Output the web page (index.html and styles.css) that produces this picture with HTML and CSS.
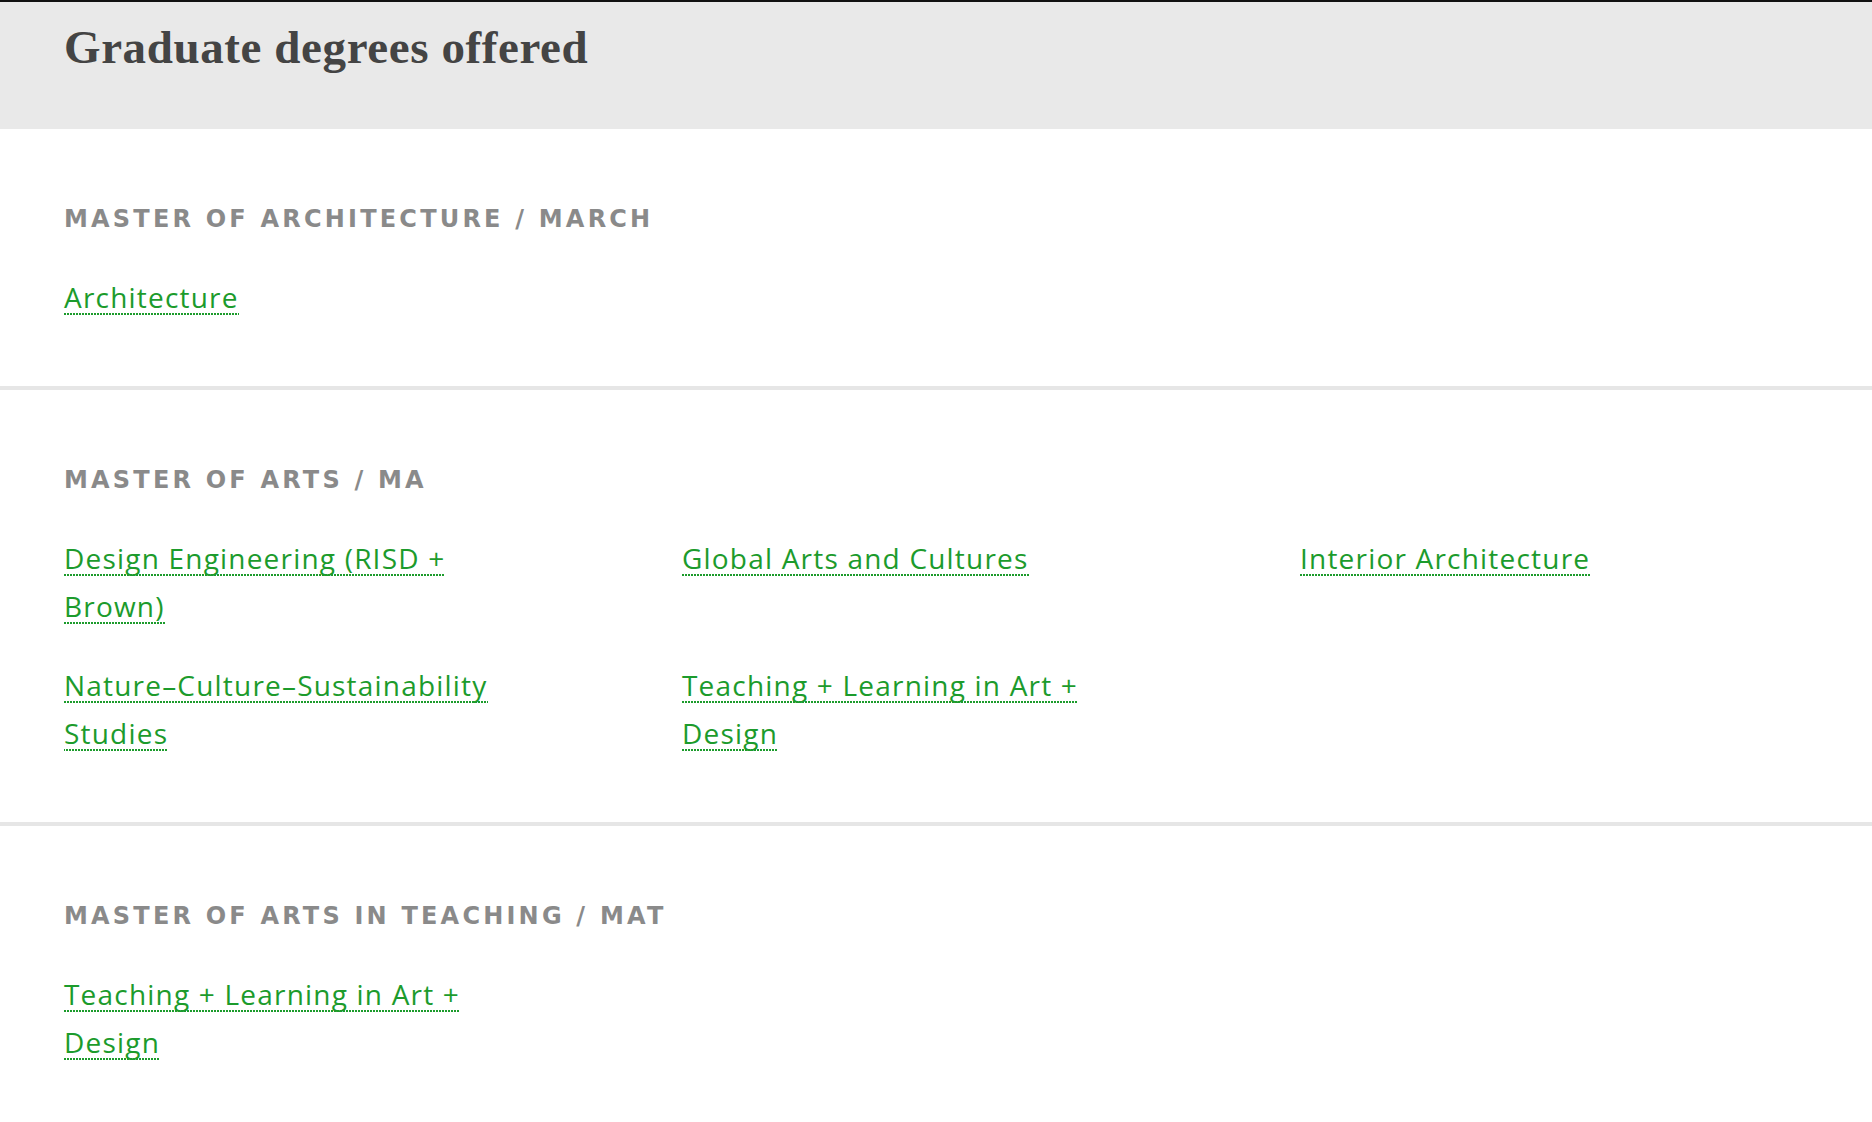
FILE: index.html
```html
<!DOCTYPE html>
<html lang="en">
<head>
<meta charset="utf-8">
<title>Graduate degrees offered</title>
<link rel="stylesheet" href="styles.css">
</head>
<body>
<header class="page-head">
  <h1 class="page-title">Graduate degrees offered</h1>
</header>
<main>
  <section class="degree">
    <h2 class="degree-title">Master of Architecture / MArch</h2>
    <ul class="programs">
      <li><a href="#">Architecture</a></li>
    </ul>
  </section>
  <section class="degree">
    <h2 class="degree-title">Master of Arts / MA</h2>
    <ul class="programs">
      <li><a href="#">Design Engineering (RISD + Brown)</a></li>
      <li><a href="#">Global Arts and Cultures</a></li>
      <li><a href="#">Interior Architecture</a></li>
      <li><a href="#">Nature–Culture–Sustainability Studies</a></li>
      <li><a href="#">Teaching + Learning in Art + Design</a></li>
    </ul>
  </section>
  <section class="degree last">
    <h2 class="degree-title">Master of Arts in Teaching / MAT</h2>
    <ul class="programs">
      <li><a href="#">Teaching + Learning in Art + Design</a></li>
    </ul>
  </section>
</main>
</body>
</html>
```
FILE: styles.css
```css
html, body {
  margin: 0;
  padding: 0;
  background: #ffffff;
}

body {
  font-family: "Open Sans", "Liberation Sans", sans-serif;
}

.page-head {
  background: #e9e9e9;
  border-top: 2px solid #111111;
  padding: 23px 64px 59px;
}

.page-title {
  margin: 0;
  font-family: "Liberation Serif", "DejaVu Serif", serif;
  font-weight: 700;
  font-size: 47px;
  line-height: 45px;
  color: #444444;
  letter-spacing: 0.6px;
}

.degree {
  padding: 76px 64px 65px;
  border-bottom: 4px solid #e6e6e6;
}

.degree.last {
  border-bottom: none;
}

.degree-title {
  margin: 0 0 40px;
  font-family: "DejaVu Sans", "Open Sans", sans-serif;
  font-weight: 700;
  font-size: 24px;
  line-height: 28px;
  letter-spacing: 3.2px;
  text-transform: uppercase;
  color: #8a8a8a;
}

.programs {
  list-style: none;
  margin: 0;
  padding: 0;
  display: grid;
  grid-template-columns: repeat(3, 458px);
  column-gap: 160px;
  row-gap: 31px;
}

.programs li {
  font-size: 28px;
  line-height: 48px;
  letter-spacing: 1.2px;
}

.programs a {
  color: #1c9b2c;
  text-decoration: none;
  background-image: linear-gradient(to right, #1c9b2c 60%, transparent 60%);
  background-repeat: repeat-x;
  background-size: 3px 2px;
  background-position: left 0 bottom 1px;
}
```
